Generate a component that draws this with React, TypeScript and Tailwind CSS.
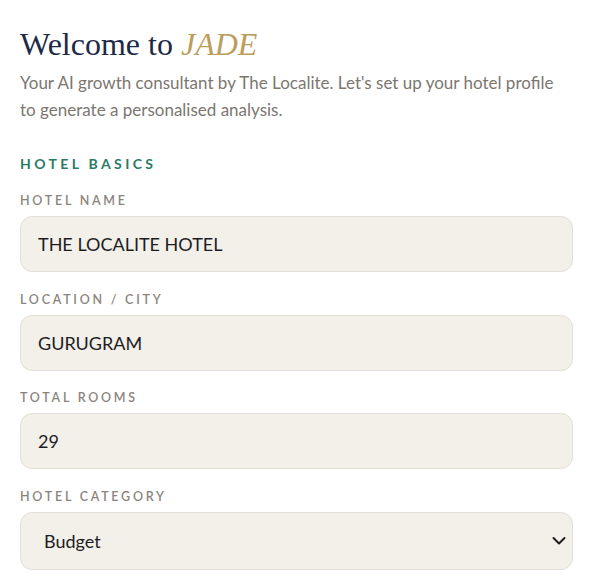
import React from "react";

const labelCls =
  "block text-[12.5px] leading-[17px] font-semibold tracking-[0.22em] uppercase text-[#8a847d] mb-[7px]";
const inputCls =
  "w-full h-[56px] rounded-[12px] border border-[#e3dfd7] bg-[#f3f0ea] px-[17px] text-[18px] text-[#1d1d1f] outline-none";

function Field({ label, value }: { label: string; value: string }) {
  return (
    <div>
      <label className={labelCls}>{label}</label>
      <input className={inputCls} defaultValue={value} />
    </div>
  );
}

export default function App() {
  return (
    <div
      className="min-h-screen bg-white px-5 pt-[24px]"
      style={{ fontFamily: "Lato, 'Noto Sans', sans-serif" }}
    >
      <div className="w-[553px]">
        <h1
          className="text-[32px] leading-[40px] text-[#1c2a47]"
          style={{ fontFamily: "'Liberation Serif', 'DejaVu Serif', serif" }}
        >
          Welcome to <em className="text-[#bb9d5c]">JADE</em>
        </h1>
        <p className="mt-[5px] text-[17px] leading-[27px] text-[#7c7670]">
          Your AI growth consultant by The Localite. Let's set up your hotel profile
          to generate a personalised analysis.
        </p>

        <h2 className="mt-[32px] mb-[19px] text-[14px] leading-[18px] font-bold tracking-[0.24em] uppercase text-[#2b7a68]">
          Hotel Basics
        </h2>

        <div className="flex flex-col gap-[18.7px]">
          <Field label="Hotel Name" value="THE LOCALITE HOTEL" />
          <Field label="Location / City" value="GURUGRAM" />
          <Field label="Total Rooms" value="29" />
          <div>
            <label className={labelCls}>Hotel Category</label>
            <div className="relative">
              <select
                className="w-full h-[58px] appearance-none rounded-[12px] border border-[#e3dfd7] bg-[#f3f0ea] pl-[23px] pr-10 text-[18px] text-[#1d1d1f] outline-none"
                defaultValue="Budget"
              >
                <option>Budget</option>
                <option>Midscale</option>
                <option>Upscale</option>
                <option>Luxury</option>
              </select>
              <svg
                className="pointer-events-none absolute right-[7px] top-1/2 -translate-y-1/2"
                width="14"
                height="9"
                viewBox="0 0 14 9"
                fill="none"
                stroke="#1d1d1f"
                strokeWidth="2"
                strokeLinecap="round"
                strokeLinejoin="round"
              >
                <path d="M1.5 1.5l5.5 5.5 5.5-5.5" />
              </svg>
            </div>
          </div>
        </div>
      </div>
    </div>
  );
}
